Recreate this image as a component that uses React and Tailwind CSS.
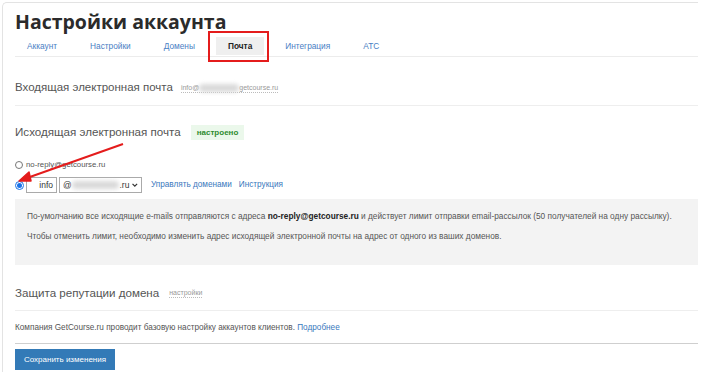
import React from "react";

const TABS = [
  { label: "Аккаунт" },
  { label: "Настройки" },
  { label: "Домены" },
  { label: "Почта", active: true },
  { label: "Интеграция" },
  { label: "АТС" },
];

// blurred part of the address (hidden in the screenshot)
function Blur({ w }) {
  return <span className={`inline-block h-[8px] rounded-sm bg-[#d9d9d9] blur-[2px] align-middle ${w}`} />;
}

export default function App() {
  return (
    <div className="relative w-[723px] h-[372px] overflow-hidden bg-white font-['Liberation_Sans',Arial,sans-serif] text-[#444]">
      <div className="ml-[2px] mt-[2px] w-[696px] h-[380px] border-l border-t border-[#e3e3e3] rounded-tl-[5px] pl-[12px]">
        {/* Title */}
        <h1 className="pt-[7px] h-[34px] text-[19.5px] leading-[24px] font-bold text-[#2b2b2b] font-['Open_Sans',sans-serif]">
          Настройки аккаунта
        </h1>

        {/* Tabs */}
        <div className="flex gap-[9px] h-[20px] border-b border-[#ececec]">
          {TABS.map((t) => (
            <div
              key={t.label}
              className={`px-3 h-[18px] flex items-center pt-[1px] text-[8.3px] ${
                t.active ? "bg-[#efefef] font-bold text-[#222]" : "text-[#4a80c4]"
              }`}
            >
              {t.label}
            </div>
          ))}
        </div>

        {/* Incoming */}
        <div className="h-[49px] pt-[14px] flex items-center gap-[8px] border-b border-[#eeeeee]">
          <span className="text-[11.5px] text-[#555]">Входящая электронная почта</span>
          <span className="text-[7px] text-[#999] border-b border-dotted border-[#bbb] leading-[9px] flex items-center">
            info@<Blur w="w-[40px]" />getcourse.ru
          </span>
        </div>

        {/* Outgoing */}
        <div className="h-[50px] flex items-center gap-[10px] pt-[2px]">
          <span className="text-[11.6px] text-[#555]">Исходящая электронная почта</span>
          <span className="bg-[#ebf8eb] text-[#2e8b2e] font-bold text-[8px] px-[6px] py-[3px] leading-[9px]">
            настроено
          </span>
        </div>

        <div className="flex items-center gap-[3px] h-[14px] mt-[2px]">
          <span className="w-[8px] h-[8px] rounded-full border border-[#777] bg-white" />
          <span className="text-[7.8px] text-[#555]">no-reply@getcourse.ru</span>
        </div>

        <div className="flex items-center h-[18px] mt-[4px]">
          <span className="w-[9px] h-[9px] rounded-full border border-[#1a73e8] bg-white flex items-center justify-center">
            <span className="w-[5px] h-[5px] rounded-full bg-[#1a73e8]" />
          </span>
          <div className="ml-[2px] w-[31px] h-[16px] border border-[#aaa] text-[8.5px] text-[#333] flex items-center justify-end pr-[3px]">
            info
          </div>
          <div className="ml-[2px] w-[83px] h-[16px] border border-[#aaa] text-[8.5px] text-[#333] flex items-center pl-[3px] pr-[2px]">
            <span>@</span>
            <Blur w="w-[50px]" />
            <span className="ml-auto">.ru</span>
            <svg viewBox="0 0 10 10" className="w-[8px] h-[8px] ml-[2px]" fill="none" stroke="#333" strokeWidth="1.6">
              <path d="M2 3.5 L5 6.5 L8 3.5" />
            </svg>
          </div>
          <a className="ml-[9px] text-[8.2px] text-[#3a78bd]">Управлять доменами</a>
          <a className="ml-[7px] text-[8.2px] text-[#3a78bd]">Инструкция</a>
        </div>

        {/* Info box */}
        <div className="mt-[5px] h-[66px] bg-[#f3f3f3] pl-[12px] pt-[12px] text-[8.3px] text-[#555] leading-[10px]">
          <p>
            По-умолчанию все исходящие e-mails отправляются с адреса{" "}
            <b className="text-[#222]">no-reply@getcourse.ru</b> и действует лимит отправки email-рассылок (50
            получателей на одну рассылку).
          </p>
          <p className="mt-[10px]">
            Чтобы отменить лимит, необходимо изменить адрес исходящей электронной почты на адрес от одного из ваших
            доменов.
          </p>
        </div>

        {/* Domain reputation */}
        <div className="h-[46px] flex items-center gap-[10px] border-b border-[#eeeeee] pt-[10px]">
          <span className="text-[11.6px] text-[#555]">Защита репутации домена</span>
          <span className="text-[7px] text-[#999] border-b border-dotted border-[#bbb] leading-[9px]">настройки</span>
        </div>

        <div className="h-[33px] pt-[2px] flex items-center border-b border-[#cfcfcf] text-[8.2px] text-[#555]">
          <span>
            Компания GetCourse.ru проводит базовую настройку аккаунтов клиентов.{" "}
            <a className="text-[#3a78bd]">Подробнее</a>
          </span>
        </div>

        <button className="mt-[5px] w-[100px] h-[21px] bg-[#337ab7] text-white text-[8px] flex items-center justify-center">
          Сохранить изменения
        </button>
      </div>

      {/* Annotation: red frame around the active tab */}
      <div className="absolute left-[208px] top-[31px] w-[61px] h-[31px] border-2 border-[#e41c1c]" />

      {/* Annotation: red arrow */}
      <svg className="absolute left-0 top-0 w-[723px] h-[372px] pointer-events-none" viewBox="0 0 723 372">
        <line x1="123" y1="144" x2="27" y2="178" stroke="#e41c1c" strokeWidth="2" />
        <path d="M19 181 L29 172 L31 181 Z" fill="#e41c1c" stroke="#e41c1c" strokeWidth="1.5" strokeLinejoin="round" />
      </svg>
    </div>
  );
}
